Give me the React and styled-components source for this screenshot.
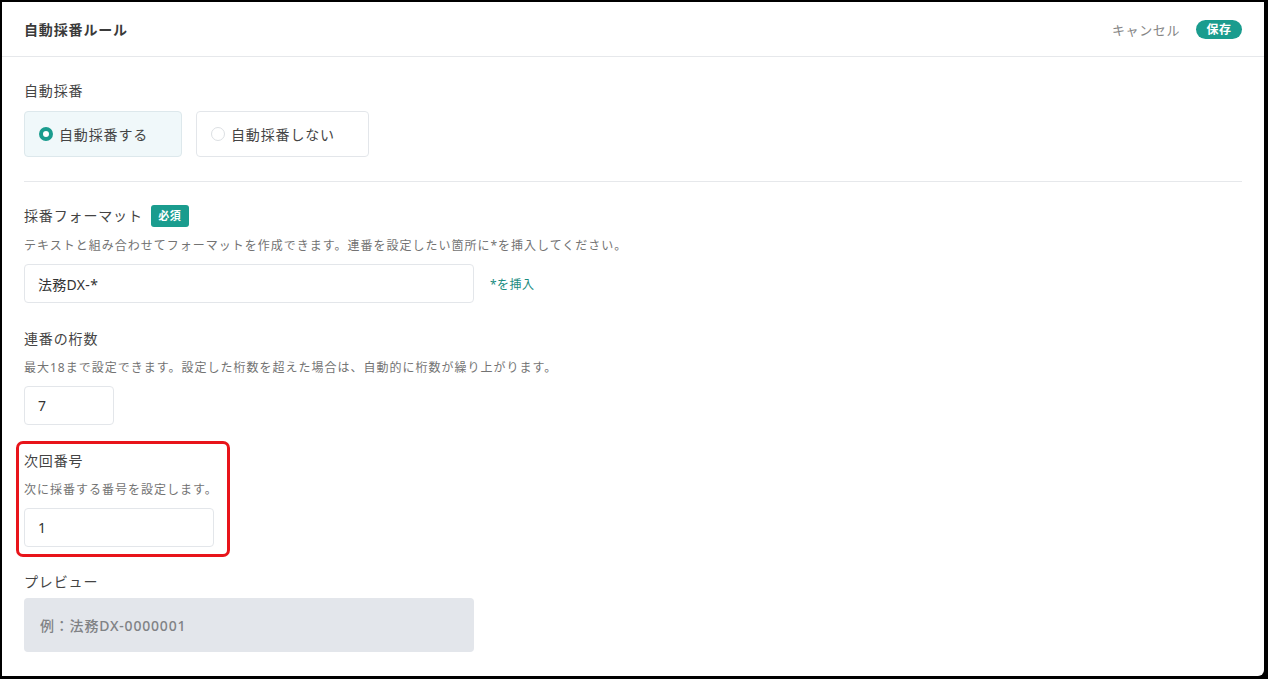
import styled, { createGlobalStyle } from "styled-components";

const GlobalStyle = createGlobalStyle`
  html, body {
    margin: 0;
    padding: 0;
    background: #000000;
  }
  body {
    font-family: "Noto Sans", "Noto Sans CJK JP", sans-serif;
    letter-spacing: 0.85px;
    color: #333333;
  }
`;

const Panel = styled.div`
  box-sizing: border-box;
  margin: 2px 4px 3px 2px;
  height: 674px;
  background: #ffffff;
  border-radius: 0 0 6px 0;
  overflow: hidden;
`;

const Header = styled.div`
  height: 54px;
  padding: 0 22px;
  display: flex;
  align-items: center;
  justify-content: space-between;
  border-bottom: 1px solid #e6e8eb;
  h1 {
    margin: 0;
    font-size: 14px;
    font-weight: 700;
    color: #3a3a3a;
  }
`;

const Actions = styled.div`
  display: flex;
  align-items: center;
  gap: 16px;
`;

const Cancel = styled.button`
  border: none;
  background: none;
  padding: 0;
  font-family: inherit;
  font-size: 13px;
  letter-spacing: 0.6px;
  color: #858585;
`;

const Save = styled.button`
  border: none;
  height: 19px;
  width: 46px;
  border-radius: 10px;
  background: #1a9c8e;
  color: #ffffff;
  font-family: inherit;
  font-size: 12px;
  font-weight: 700;
  letter-spacing: 0.5px;
  padding: 0;
  display: flex;
  align-items: center;
  justify-content: center;
`;

const Body = styled.div`
  padding: 24px 22px 0;
`;

const Label = styled.div`
  font-size: 14px;
  line-height: 20px;
  color: #444444;
  display: flex;
  align-items: center;
  gap: 8px;
  height: ${(p) => (p.tall ? "22px" : "20px")};
`;

const Badge = styled.span`
  display: inline-flex;
  align-items: center;
  justify-content: center;
  width: 38px;
  height: 22px;
  border-radius: 3px;
  background: #1a9c8e;
  color: #ffffff;
  font-size: 11px;
  font-weight: 700;
  letter-spacing: 0.5px;
`;

const RadioRow = styled.div`
  display: flex;
  gap: 14px;
  margin-top: 10px;
`;

const RadioCard = styled.label`
  box-sizing: border-box;
  height: 46px;
  width: ${(p) => p.w}px;
  display: flex;
  align-items: center;
  gap: 6px;
  padding-left: 14px;
  border: 1px solid ${(p) => (p.checked ? "#dde8ec" : "#e3e6ea")};
  border-radius: 4px;
  background: ${(p) => (p.checked ? "#f0f8fa" : "#ffffff")};
  font-size: 14px;
  color: #444444;
`;

const Dot = styled.span`
  box-sizing: border-box;
  width: 14px;
  height: 14px;
  border-radius: 50%;
  background: #ffffff;
  border: ${(p) => (p.checked ? "4px solid #1a9c8e" : "1px solid #dcdfe3")};
`;

const Divider = styled.hr`
  border: none;
  border-top: 1px solid #e6e8eb;
  margin: 24px 0 23px;
`;

const Field = styled.div`
  margin-top: ${(p) => p.gap || 0}px;
`;

const Highlight = styled.div`
  width: 203px;
  margin: 16px 0 0 -8px;
  padding: 7px 0 7px 5px;
  border: 3px solid #e8141a;
  border-radius: 7px;
`;

const Desc = styled.div`
  margin-top: 10px;
  font-size: 12px;
  line-height: 18px;
  letter-spacing: 1px;
  color: #737373;
`;

const InputRow = styled.div`
  display: flex;
  align-items: center;
  gap: 16px;
  margin-top: 9px;
`;

const Input = styled.div`
  box-sizing: border-box;
  width: ${(p) => p.w}px;
  height: 39px;
  border: 1px solid #e3e6ea;
  border-radius: 4px;
  background: #ffffff;
  padding-left: 13px;
  display: flex;
  align-items: center;
  font-size: 14px;
  color: #333333;
  letter-spacing: 0.3px;
`;

const Insert = styled.a`
  font-size: 12px;
  color: #1a8c7f;
  letter-spacing: 0.5px;
`;

const Preview = styled.div`
  box-sizing: border-box;
  margin-top: 6px;
  width: 450px;
  height: 54px;
  border-radius: 4px;
  background: #e3e6eb;
  padding-left: 16px;
  display: flex;
  align-items: center;
  font-size: 14px;
  font-weight: 500;
  color: #808285;
  letter-spacing: 0.8px;
`;

export default function App() {
  return (
    <>
      <GlobalStyle />
      <Panel>
        <Header>
          <h1>自動採番ルール</h1>
          <Actions>
            <Cancel>キャンセル</Cancel>
            <Save>保存</Save>
          </Actions>
        </Header>
        <Body>
          <Label>自動採番</Label>
          <RadioRow>
            <RadioCard w={158} checked>
              <Dot checked />
              自動採番する
            </RadioCard>
            <RadioCard w={173}>
              <Dot />
              自動採番しない
            </RadioCard>
          </RadioRow>
          <Divider />

          <Field>
            <Label tall>
              採番フォーマット <Badge>必須</Badge>
            </Label>
            <Desc>テキストと組み合わせてフォーマットを作成できます。連番を設定したい箇所に*を挿入してください。</Desc>
            <InputRow>
              <Input w={450}>法務DX-*</Input>
              <Insert>*を挿入</Insert>
            </InputRow>
          </Field>

          <Field gap={26}>
            <Label>連番の桁数</Label>
            <Desc>最大18まで設定できます。設定した桁数を超えた場合は、自動的に桁数が繰り上がります。</Desc>
            <InputRow>
              <Input w={90}>7</Input>
            </InputRow>
          </Field>

          <Highlight>
            <Label>次回番号</Label>
            <Desc>次に採番する番号を設定します。</Desc>
            <InputRow>
              <Input w={190}>1</Input>
            </InputRow>
          </Highlight>

          <Field gap={15}>
            <Label>プレビュー</Label>
            <Preview>例：法務DX-0000001</Preview>
          </Field>
        </Body>
      </Panel>
    </>
  );
}
